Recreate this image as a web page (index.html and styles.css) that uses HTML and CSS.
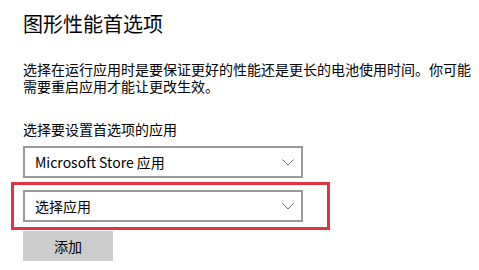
FILE: index.html
```html
<!DOCTYPE html>
<html lang="zh-CN">
<head>
<meta charset="utf-8">
<title>图形性能首选项</title>
<link rel="stylesheet" href="styles.css">
</head>
<body>
<main class="page">
  <h1 class="title">图形性能首选项</h1>
  <p class="desc">选择在运行应用时是要保证更好的性能还是更长的电池使用时间。你可能<br>需要重启应用才能让更改生效。</p>
  <div class="label">选择要设置首选项的应用</div>
  <div class="select">
    <span class="select-text">Microsoft Store 应用</span>
    <svg class="chev" width="12" height="7" viewBox="0 0 12 7"><polyline points="0.5,0.5 6,6 11.5,0.5" fill="none" stroke="#6e6e6e" stroke-width="1"/></svg>
  </div>
  <div class="highlight">
    <div class="select">
      <span class="select-text">选择应用</span>
      <svg class="chev" width="12" height="7" viewBox="0 0 12 7"><polyline points="0.5,0.5 6,6 11.5,0.5" fill="none" stroke="#6e6e6e" stroke-width="1"/></svg>
    </div>
  </div>
  <button class="btn" type="button">添加</button>
</main>
</body>
</html>
```
FILE: styles.css
```css
html, body {
  margin: 0;
  padding: 0;
  background: #ffffff;
}
body {
  font-family: "Noto Sans CJK SC", "Noto Sans", sans-serif;
  color: #000;
  width: 479px;
  height: 270px;
  overflow: hidden;
}
.page {
  padding: 10px 0 0 23px;
  display: flex;
  flex-direction: column;
  align-items: flex-start;
}
.title {
  margin: 0;
  font-size: 20px;
  line-height: 28px;
  font-weight: 400;
}
.desc {
  margin: 23px 0 0 0;
  font-size: 14px;
  line-height: 17px;
  white-space: nowrap;
}
.label {
  margin-top: 26px;
  font-size: 14px;
  line-height: 17px;
}
.select {
  margin-top: 8px;
  box-sizing: border-box;
  width: 280px;
  height: 32px;
  border: 2px solid #999999;
  display: flex;
  align-items: center;
  justify-content: space-between;
  padding: 0 7px 0 10px;
  font-size: 14px;
}
.select-text {
  line-height: 17px;
}
.chev {
  display: block;
}
.highlight {
  margin: 4px 0 0 -12px;
  border: 3px solid #e0353f;
  padding: 5px 24px 5px 9px;
}
.highlight .select {
  margin-top: 0;
}
.btn {
  margin-top: 1px;
  width: 90px;
  height: 30px;
  border: 0;
  background: #cccccc;
  font-family: "Noto Sans CJK SC", sans-serif;
  font-size: 14px;
  color: #000;
  padding: 0;
}
```
